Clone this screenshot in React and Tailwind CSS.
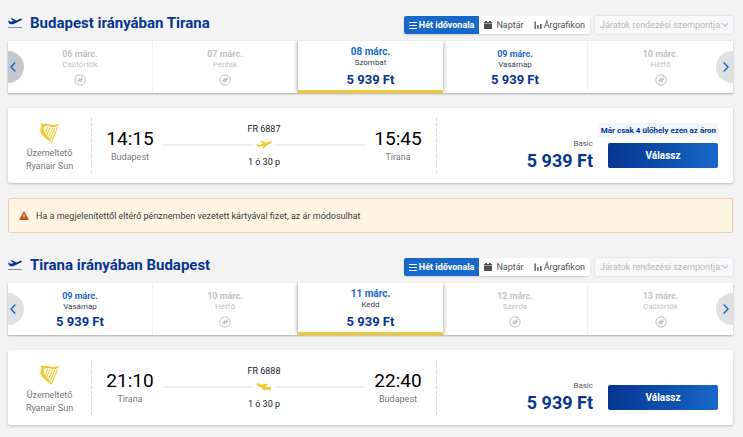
import React, { useState } from 'react';

const trips = [
    {
        id: 'out',
        title: 'Budapest irányában Tirana',
        selected: 2,
        days: [
            { date: '06 márc.', day: 'Csütörtök' },
            { date: '07 márc.', day: 'Péntek' },
            { date: '08 márc.', day: 'Szombat', price: '5 939 Ft' },
            { date: '09 márc.', day: 'Vasárnap', price: '5 939 Ft' },
            { date: '10 márc.', day: 'Hétfő' },
        ],
        prevDisabled: true,
        flight: { number: 'FR 6887', dep: '14:15', from: 'Budapest', arr: '15:45', to: 'Tirana', length: '1 ó 30 p', price: '5 939 Ft', badge: 'Már csak 4 ülőhely ezen az áron' },
    },
    {
        id: 'back',
        title: 'Tirana irányában Budapest',
        selected: 2,
        days: [
            { date: '09 márc.', day: 'Vasárnap', price: '5 939 Ft' },
            { date: '10 márc.', day: 'Hétfő' },
            { date: '11 márc.', day: 'Kedd', price: '5 939 Ft' },
            { date: '12 márc.', day: 'Szerda' },
            { date: '13 márc.', day: 'Csütörtök' },
        ],
        flight: { number: 'FR 6888', dep: '21:10', from: 'Tirana', arr: '22:40', to: 'Budapest', length: '1 ó 30 p', price: '5 939 Ft', inbound: true },
    },
];

const TakeoffIcon = () => (
    <svg className="w-[14px] h-3 shrink-0" viewBox="0 0 14 12" aria-hidden="true">
        <path d="M0.6 5.4 L0.2 3.8 L1.2 3.7 L2.7 4.7 L5.6 4.1 L2.6 1.7 L4 1.3 L8.6 3.4 L11.6 2.1 C12.7 1.6 13.7 1.7 13.9 2.2 C14 2.7 13.3 3.3 12.4 3.7 L6.2 6.7 C4.4 7.5 1.4 7.7 0.6 5.4 Z" fill="#073590" />
        <path d="M0 10.5 H14" stroke="#7690c4" />
    </svg>
);

const PlaneIcon = ({ inbound }) => (
    <svg className="w-4 h-3 shrink-0" viewBox="0 0 16 12" aria-hidden="true">
        {inbound ? (
            <path d="M0.5 3 C0.7 2.2 1.8 2.1 2.8 2.5 L6 3.8 L10.4 2.6 L11.8 3 L9.4 5.3 L12.2 6.4 L14 5.6 L15.3 6 L14.6 7.6 L15.2 9.2 C12.8 9.5 10.6 8.8 8.6 8 L9.4 9.6 L8 9.4 L5.2 6.6 L2 5 C0.9 4.4 0.3 3.8 0.5 3 Z" fill="#f1c933" />
        ) : (
            <path d="M0.4 5.9 L1.6 5.2 L3.6 5.9 L7 4.8 L4.4 2.3 L5.8 1.8 L10.6 3.8 L13.4 2.6 C14.6 2.1 15.4 2.3 15.7 2.8 C15.9 3.4 15.4 4.1 14.3 4.6 L11.4 5.9 L7.6 9.2 L6.2 9.3 L7.4 7 L4.2 7.6 C2.4 7.8 1 7.6 0.4 5.9 Z" fill="#f1c933" />
        )}
    </svg>
);

const HarpLogo = () => (
    <svg className="w-5 h-5" viewBox="0 0 20 20" aria-hidden="true">
        <path d="M0.6 1.4 C1.6 0.2 3.6 0.2 4.4 1.2 C7 0.6 9 1.2 11.4 1.8 C14 2.4 17 1.4 19.8 1.1 C18.6 2.8 17 3.6 15.2 3.9 C12 4.4 9.4 2.8 6.6 2.9 C4.8 3 4 4.2 3.8 5.6 C3.4 7.6 4.8 9.6 6.6 11.8 C8.4 14.2 10.4 16.4 11.4 19.6 C8.4 17.6 4.2 14.6 2 11.6 C0.2 9 -0.2 6.6 0.8 4.6 L2 3.2 Z" fill="#f1c933" />
        <path d="M17.4 4 C16.6 8 13.6 12 11.6 19.4 M14.8 4.8 C14.4 8.6 11.4 12 10.4 16.2 M12.4 4.6 C12 8 9.4 10.6 8.8 13.8 M10 4.4 C9.6 7 7.4 9 7.2 12 M7.6 4.2 L5.8 9.6" stroke="#f1c933" strokeWidth="1.1" fill="none" />
    </svg>
);

const NoFlightIcon = () => (
    <svg className="w-3 h-3" viewBox="0 0 12 12" fill="none" stroke="#b9bcc0" aria-hidden="true">
        <circle cx="6" cy="6" r="5.2" strokeWidth="0.9" />
        <path d="M3.4 9.2 L8.8 2.8" />
        <path d="M3 6.6 L9 5.4 M5 3.8 L6.2 8.4 M7.6 4 L7 8.2" strokeWidth="0.9" />
    </svg>
);

const Chevron = ({ dir }) => (
    <svg className="w-[6px] h-[10px]" viewBox="0 0 6 10" fill="none" stroke="#1868c9" strokeWidth="1.4" aria-hidden="true">
        <path d={dir === 'left' ? 'M5.3 0.5 L1 5 L5.3 9.5' : 'M0.7 0.5 L5 5 L0.7 9.5'} />
    </svg>
);

const viewIcons = {
    week: <path d="M0 1.5 H8 M0 4.5 H8 M0 7.5 H8" stroke="currentColor" />,
    calendar: (
        <>
            <path d="M0 1 H1 V0 H3 V1 H5 V0 H7 V1 H8 V8 H0 Z" fill="currentColor" />
            <path d="M0 2.5 H8" stroke="#b4b6ba" strokeWidth="0.8" />
        </>
    ),
    chart: <path d="M0.5 0.5 H1.8 V8 H0.5 Z M3.2 4 H4.5 V8 H3.2 Z M6 3 H7.5 V8 H6 Z" fill="currentColor" />,
};

const views = [
    { id: 'week', label: 'Hét idővonala', gap: 'gap-[2px]' },
    { id: 'calendar', label: 'Naptár', gap: 'gap-1' },
    { id: 'chart', label: 'Árgrafikon', gap: 'gap-[2px]' },
];

const ViewSwitch = () => {
    const [view, setView] = useState('week');

    return (
        <div className="flex h-[18px] rounded-[2px] overflow-hidden bg-white shadow-[0_1px_2px_rgba(0,0,0,0.15)]">
            {views.map((item) => (
                <button
                    key={item.id}
                    onClick={() => setView(item.id)}
                    className={`flex items-center px-[5px] text-[9px] leading-3 whitespace-nowrap ${item.gap} ${
                        view === item.id ? 'bg-[#1868c9] text-white font-bold' : 'text-[#4c5056]'
                    }`}
                >
                    <svg className="w-2 h-2 shrink-0" viewBox="0 0 8 8" fill="none" aria-hidden="true">{viewIcons[item.id]}</svg>
                    {item.label}
                </button>
            ))}
        </div>
    );
};

const DayStrip = ({ days, initial, prevDisabled }) => {
    const [selected, setSelected] = useState(initial);

    return (
        <div className="relative">
            <div className="grid grid-cols-5 h-[52px] bg-white shadow-[0_1px_2px_rgba(0,0,0,0.3)]">
                {days.map((item, index) => {
                    const active = index === selected;
                    return (
                        <button
                            key={item.date}
                            disabled={!item.price}
                            onClick={() => setSelected(index)}
                            className={`flex flex-col items-center ${
                                active
                                    ? 'relative bg-white pt-[5px] border-b-3 border-[#f1c933] shadow-[0_0_5px_rgba(0,0,0,0.4)] [clip-path:inset(0_-6px_0_-6px)]'
                                    : 'pt-[7px] border-r border-[#f1f1f1] last:border-r-0'
                            }`}
                        >
                            <span className={`font-bold leading-3 ${active ? 'text-[10px]' : 'text-[9px]'} ${item.price ? 'text-[#1868c9]' : 'text-[#bfc2c5]'}`}>
                                {item.date}
                            </span>
                            <span className={`text-[8px] leading-[10px] ${item.price ? 'text-[#3c4046]' : 'text-[#bfc2c5]'}`}>{item.day}</span>
                            {item.price ? (
                                <span className={`text-[13px] leading-4 font-bold text-[#073590] ${active ? 'mt-1' : 'mt-[2px]'}`}>{item.price}</span>
                            ) : (
                                <span className="mt-1"><NoFlightIcon /></span>
                            )}
                        </button>
                    );
                })}
            </div>
            <button
                aria-label="Előző napok"
                className={`absolute left-0 top-[10px] w-4 h-8 rounded-r-full flex items-center pl-[2px] ${prevDisabled ? 'bg-[#c4c8cc]' : 'bg-[#dfe1e3]'}`}
            >
                <Chevron dir="left" />
            </button>
            <button
                aria-label="Következő napok"
                className="absolute right-0 top-[10px] w-[17px] h-8 rounded-l-full flex items-center justify-end pr-1 bg-[#dfe1e3]"
            >
                <Chevron dir="right" />
            </button>
        </div>
    );
};

const TimeBlock = ({ time, city }) => (
    <div className="w-[50px] pt-[9px] text-center">
        <p className="text-[19px] leading-6 text-black">{time}</p>
        <p className="text-[9px] leading-3 text-[#75787d]">{city}</p>
    </div>
);

const FlightCard = ({ flight }) => (
    <article className="mt-[15px] py-[10px] grid grid-cols-[84px_minmax(0,345fr)_minmax(0,296fr)] rounded-[2px] bg-white shadow-[0_1px_3px_rgba(0,0,0,0.25)]">
        <div className="h-[55px] pt-[5px] flex flex-col items-center border-r border-dashed border-[#d8d8d8]">
            <HarpLogo />
            <p className="mt-1 text-[9px] leading-[13px] text-center text-[#75787d]">
                Üzemeltető<br />Ryanair Sun
            </p>
        </div>

        <div className="px-[13px] flex justify-between items-start gap-2 border-r border-dashed border-[#d8d8d8]">
            <TimeBlock time={flight.dep} city={flight.from} />
            <div className="flex-1 pt-[5px] text-center text-[9px] text-[#1c1c1c]">
                <p className="leading-3">{flight.number}</p>
                <div className="my-1 flex items-center gap-1">
                    <span className="flex-1 h-[2px] bg-[#efefef]" />
                    <PlaneIcon inbound={flight.inbound} />
                    <span className="flex-1 h-[2px] bg-[#efefef]" />
                </div>
                <p className="leading-[14px]">{flight.length}</p>
            </div>
            <TimeBlock time={flight.arr} city={flight.to} />
        </div>

        <div className="pr-[15px] flex flex-col items-end justify-end">
            {flight.badge && (
                <p className="px-[2px] rounded-[2px] bg-[#f1f6fb] text-[8px] leading-[15px] font-bold whitespace-nowrap text-[#073590]">{flight.badge}</p>
            )}
            <div className="flex items-end gap-[15px]">
                <div className="pb-px text-right">
                    <p className="text-[8px] leading-3 text-[#5c6066]">Basic</p>
                    <p className="text-[18px] leading-[22px] font-bold text-[#073590]">{flight.price}</p>
                </div>
                <button className="mb-[5px] w-[110px] h-[25px] rounded-[2px] bg-linear-to-r from-[#073590] to-[#1868c9] text-[10px] font-bold text-white">
                    Válassz
                </button>
            </div>
        </div>
    </article>
);

const Trip = ({ trip }) => (
    <section>
        <header className="pt-4 pb-[7px] flex items-start justify-between">
            <div className="flex items-center gap-2">
                <TakeoffIcon />
                <h2 className="text-[15px] leading-[14px] font-bold text-[#073590]">{trip.title}</h2>
            </div>
            <div className="flex gap-[5px]">
                <ViewSwitch />
                <div className="relative">
                    <select
                        aria-label="Járatok rendezési szempontja"
                        defaultValue=""
                        className="appearance-none block w-[138px] h-[18px] pl-[5px] pr-1 rounded-[2px] bg-[#f8f8f8] text-[9px] leading-3 text-[#b4b7ba] shadow-[0_0_2px_rgba(0,0,0,0.2)]"
                    >
                        <option value="">Járatok rendezési szempontja:</option>
                    </select>
                    <svg className="absolute right-[5px] top-[7px] w-[6px] h-1 pointer-events-none" viewBox="0 0 6 4" fill="none" stroke="#a5c8ee" strokeWidth="1.2" aria-hidden="true">
                        <path d="M0.4 0.5 L3 3.2 L5.6 0.5" />
                    </svg>
                </div>
            </div>
        </header>
        <DayStrip days={trip.days} initial={trip.selected} prevDisabled={trip.prevDisabled} />
        <FlightCard flight={trip.flight} />
    </section>
);

const Notice = () => (
    <div role="note" className="mt-[15px] mb-[9px] h-[35px] px-[10px] flex items-center gap-[7px] rounded-[2px] border border-[#f0cdae] bg-[#fff4e4]">
        <svg className="w-[10px] h-[9px] shrink-0" viewBox="0 0 10 9" aria-hidden="true">
            <path d="M5 0 L10 9 H0 Z" fill="#c4500c" />
            <path d="M5 3 V5.8 M5 6.8 V7.8" stroke="#fff4e4" />
        </svg>
        <p className="text-[9px] leading-3 text-[#3c3c3c]">
            Ha a megjelenítettől eltérő pénznemben vezetett kártyával fizet, az ár módosulhat
        </p>
    </div>
);

const App = () => (
    <main className="min-h-screen pl-2 pr-[10px] bg-[#f3f3f3] font-['Roboto',sans-serif]">
        <Trip trip={trips[0]} />
        <Notice />
        <Trip trip={trips[1]} />
    </main>
);

export default App;
